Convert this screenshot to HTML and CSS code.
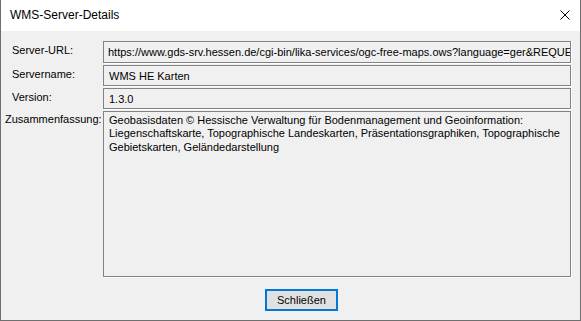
FILE: index.html
```html
<!DOCTYPE html>
<html lang="de">
<head>
<meta charset="utf-8">
<title>WMS-Server-Details</title>
<link rel="stylesheet" href="styles.css">
</head>
<body>
<div class="window">
  <div class="titlebar">
    <span class="title">WMS-Server-Details</span>
    <svg class="close" width="10" height="10" viewBox="0 0 10 10"><path d="M0.5 0.5 L9.5 9.5 M9.5 0.5 L0.5 9.5" stroke="#000" stroke-width="1" fill="none"/></svg>
  </div>
  <div class="content">
    <div class="form">
      <div class="label">Server-URL:</div>
      <div class="field field-url">https://www.gds-srv.hessen.de/cgi-bin/lika-services/ogc-free-maps.ows?language=ger&amp;REQUEST=GetCapabilities&amp;SERVICE=WMS</div>
      <div class="label">Servername:</div>
      <div class="field">WMS HE Karten</div>
      <div class="label">Version:</div>
      <div class="field">1.3.0</div>
      <div class="label label-summary">Zusammenfassung:</div>
      <div class="field field-summary">Geobasisdaten © Hessische Verwaltung für Bodenmanagement und Geoinformation:<br>Liegenschaftskarte, Topographische Landeskarten, Präsentationsgraphiken, Topographische<br>Gebietskarten, Geländedarstellung</div>
    </div>
    <div class="actions">
      <button class="btn" type="button">Schließen</button>
    </div>
  </div>
</div>
</body>
</html>
```
FILE: styles.css
```css
* { box-sizing: border-box; }
html, body {
  margin: 0;
  padding: 0;
  background: #f0f0f0;
}
body {
  font-family: "Liberation Sans", Arial, sans-serif;
  font-size: 11px;
  color: #000;
}
.window {
  width: 581px;
  height: 321px;
  border: 1px solid #6f6f6f;
  border-top: none;
  background: #f0f0f0;
  display: flex;
  flex-direction: column;
}
.titlebar {
  height: 31px;
  background: #fff;
  display: flex;
  align-items: center;
  justify-content: space-between;
  padding: 0 10px 2px 9px;
  flex: none;
}
.title {
  font-size: 12px;
  color: #000;
}
.close {
  display: block;
  margin-right: 0;
}
.content {
  flex: 1;
  padding: 10px 9px 0 0;
  display: flex;
  flex-direction: column;
}
.form {
  display: grid;
  grid-template-columns: 102px 1fr;
  grid-template-rows: 22px 21px 21px 166px;
  row-gap: 2px;
}
.label {
  padding: 2px 0 0 11px;
  line-height: 14px;
  white-space: nowrap;
}
.label-summary {
  padding: 1px 0 0 4px;
}
.field {
  border: 1px solid #828282;
  box-shadow: 1px 1px 0 #ffffff;
  padding: 3px 4px 0 5px;
  line-height: 14px;
  white-space: nowrap;
  overflow: hidden;
  background: #f0f0f0;
}
.field-url {
  padding-left: 4px;
}
.field-summary {
  padding: 2px 4px 0 5px;
  line-height: 13.3px;
}
.actions {
  display: flex;
  padding: 12px 0 0 264px;
}
.btn {
  width: 73px;
  height: 22px;
  border: 2px solid #0078d7;
  background: #e1e1e1;
  font-family: "Liberation Sans", Arial, sans-serif;
  font-size: 11px;
  color: #000;
  padding: 0;
  margin: 0;
}
```
